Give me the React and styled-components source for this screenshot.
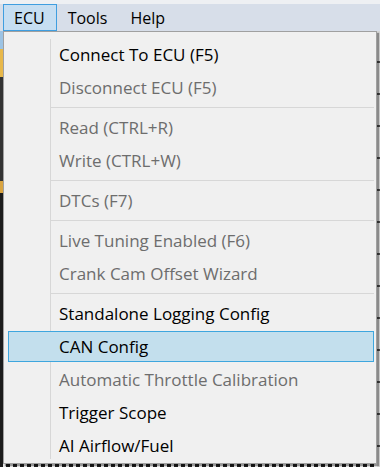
import styled, { createGlobalStyle } from "styled-components";

const GlobalStyle = createGlobalStyle`
  html, body {
    margin: 0;
    padding: 0;
    width: 380px;
    height: 467px;
    overflow: hidden;
    background: #2a2a2a;
  }
  body {
    font-family: "Open Sans", "Noto Sans", "Liberation Sans", sans-serif;
  }
`;

const items = [
  { label: "Connect To ECU (F5)" },
  { label: "Disconnect ECU (F5)", disabled: true },
  { sep: true },
  { label: "Read (CTRL+R)", disabled: true },
  { label: "Write (CTRL+W)", disabled: true },
  { sep: true },
  { label: "DTCs (F7)", disabled: true },
  { sep: true },
  { label: "Live Tuning Enabled (F6)", disabled: true },
  { label: "Crank Cam Offset Wizard", disabled: true },
  { sep: true },
  { label: "Standalone Logging Config" },
  { label: "CAN Config", active: true },
  { label: "Automatic Throttle Calibration", disabled: true },
  { label: "Trigger Scope" },
  { label: "AI Airflow/Fuel" },
];

const Screen = styled.div`
  position: relative;
  width: 380px;
  height: 467px;
  display: flex;
  flex-direction: column;
`;

const MenuBar = styled.div`
  height: 27px;
  border-top: 4px solid #eef0f3;
  background: #d7dee9;
  display: flex;
  align-items: stretch;
  padding-left: 3px;
`;

const BarItem = styled.div`
  display: flex;
  align-items: center;
  padding: 0 11px 0 10px;
  font-size: 16px;
  color: #000;
  border: 1px solid ${(p) => (p.$open ? "#3f9ee0" : "transparent")};
  background: ${(p) => (p.$open ? "#c6def2" : "transparent")};
  box-sizing: border-box;
`;

const Workspace = styled.div`
  flex: 1;
  display: flex;
`;

const LeftEdge = styled.div`
  width: 3px;
  background: linear-gradient(
    #9cc3e4 0 18px,
    #e8b84a 18px 46px,
    #333 46px 150px,
    #d9a441 150px 162px,
    #1c1c1c 162px
  );
`;

const Behind = styled.div`
  flex: 1;
  display: flex;
  align-items: flex-end;
  background: #1e1e1e;
`;

const BottomTicks = styled.div`
  height: 3px;
  width: 100%;
  background: repeating-linear-gradient(90deg, #e6e6e6 0 3px, #1e1e1e 3px 7px);
`;

const RightEdge = styled.div`
  width: 3px;
  background: repeating-linear-gradient(#d4d4d4 0 30px, #4a4a4a 30px 32px);
`;

const Popup = styled.div`
  position: absolute;
  top: 31px;
  left: 3px;
  width: 374px;
  height: 433px;
  box-sizing: border-box;
  background: #f0f0f0;
  border: 1px solid #a0a0a0;
  box-shadow: 2px 2px 1px rgba(0, 0, 0, 0.35);
  padding: 6px 0 0;
`;

const List = styled.div`
  display: flex;
  flex-direction: column;
  background: linear-gradient(#d7d7d7, #d7d7d7) no-repeat 46px 1px / 1px
    calc(100% - 4px);
`;

const Item = styled.div`
  box-sizing: border-box;
  height: 31px;
  margin: 1px 2px 1px 4px;
  padding: 0 0 1px 50px;
  display: flex;
  align-items: center;
  font-size: 17px;
  white-space: nowrap;
  color: ${(p) => (p.$disabled ? "#6d6d6d" : "#000")};
  border: 1px solid ${(p) => (p.$active ? "#3ea6de" : "transparent")};
  background: ${(p) => (p.$active ? "#c3dfed" : "transparent")};
`;

const Separator = styled.div`
  height: 7px;
  display: flex;
  align-items: center;
  padding: 0 2px 0 47px;
  &::after {
    content: "";
    flex: 1;
    height: 1px;
    background: #d7d7d7;
  }
`;

export default function App() {
  return (
    <>
      <GlobalStyle />
      <Screen>
        <MenuBar>
          <BarItem $open>ECU</BarItem>
          <BarItem>Tools</BarItem>
          <BarItem>Help</BarItem>
        </MenuBar>
        <Workspace>
          <LeftEdge />
          <Behind>
            <BottomTicks />
          </Behind>
          <RightEdge />
        </Workspace>
        <Popup>
          <List>
            {items.map((it, i) =>
              it.sep ? (
                <Separator key={i} />
              ) : (
                <Item key={i} $disabled={it.disabled} $active={it.active}>
                  {it.label}
                </Item>
              )
            )}
          </List>
        </Popup>
      </Screen>
    </>
  );
}
